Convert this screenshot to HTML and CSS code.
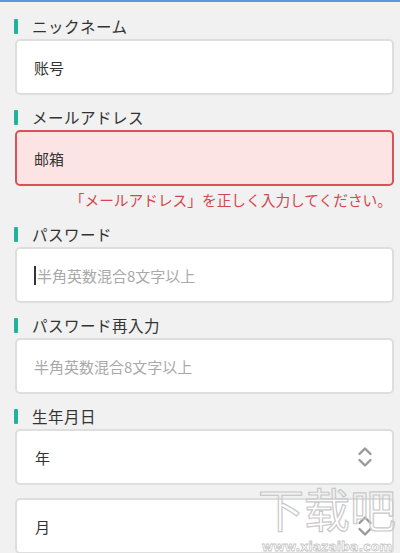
FILE: index.html
```html
<!DOCTYPE html>
<html lang="ja">
<head>
<meta charset="utf-8">
<link rel="stylesheet" href="styles.css">
</head>
<body>
<div class="topline"></div>
<form class="form">
  <div class="group">
    <div class="label"><span class="bar"></span>ニックネーム</div>
    <div class="field"><span class="value">账号</span></div>
  </div>
  <div class="group">
    <div class="label"><span class="bar"></span>メールアドレス</div>
    <div class="field error"><span class="value">邮箱</span></div>
    <div class="errmsg">「メールアドレス」を正しく入力してください。</div>
  </div>
  <div class="group">
    <div class="label"><span class="bar"></span>パスワード</div>
    <div class="field"><span class="cursor"></span><span class="placeholder">半角英数混合8文字以上</span></div>
  </div>
  <div class="group">
    <div class="label"><span class="bar"></span>パスワード再入力</div>
    <div class="field"><span class="placeholder">半角英数混合8文字以上</span></div>
  </div>
  <div class="group">
    <div class="label"><span class="bar"></span>生年月日</div>
    <div class="field select"><span class="value">年</span>
      <svg class="chev" width="16" height="24" viewBox="0 0 16 24"><path d="M2.5 9 L8 3.5 L13.5 9" fill="none" stroke="#9a9a9a" stroke-width="2.4" stroke-linecap="round" stroke-linejoin="round"/><path d="M2.5 15 L8 20.5 L13.5 15" fill="none" stroke="#9a9a9a" stroke-width="2.4" stroke-linecap="round" stroke-linejoin="round"/></svg>
    </div>
    <div class="field select next"><span class="value">月</span>
      <svg class="chev" width="16" height="24" viewBox="0 0 16 24"><path d="M2.5 9 L8 3.5 L13.5 9" fill="none" stroke="#9a9a9a" stroke-width="2.4" stroke-linecap="round" stroke-linejoin="round"/><path d="M2.5 15 L8 20.5 L13.5 15" fill="none" stroke="#9a9a9a" stroke-width="2.4" stroke-linecap="round" stroke-linejoin="round"/></svg>
    </div>
  </div>
</form>
<div class="watermark"><div class="wm-big">下载吧</div><div class="wm-small">www.xiazaiba.com</div></div>
</body>
</html>
```

FILE: styles.css
```css
html, body {
  margin: 0;
  padding: 0;
  background: #f1f1f1;
  overflow: hidden;
  height: 553px;
}
body {
  font-family: "Noto Sans CJK JP", "Noto Sans CJK SC", "Noto Sans", sans-serif;
  color: #333;
  position: relative;
}
.topline {
  height: 2px;
  background: #5a9ad6;
}
.form {
  padding: 14px 6px 0 15px;
}
.group {
  margin-top: 12px;
}
.group:first-child {
  margin-top: 0;
}
.label {
  display: flex;
  align-items: center;
  height: 20px;
  margin-bottom: 3px;
  margin-left: -1px;
  font-size: 15.5px;
  letter-spacing: 0.5px;
  color: #333;
}
.bar {
  width: 4px;
  height: 15px;
  background: #1fb39b;
  margin-right: 14px;
  border-radius: 1px;
}
.field {
  box-sizing: border-box;
  height: 56px;
  background: #fff;
  border: 2px solid #dedede;
  border-radius: 5px;
  display: flex;
  align-items: center;
  padding: 0 20px 0 17px;
  font-size: 15px;
}
.field.error {
  background: #fde4e4;
  border-color: #d8525a;
}
.value {
  color: #333;
}
.placeholder {
  color: #a9a9a9;
}
.cursor {
  display: inline-block;
  width: 2px;
  height: 19px;
  background: #333;
  margin-right: 1px;
}
.errmsg {
  height: 25px;
  line-height: 25px;
  text-align: right;
  font-size: 14.7px;
  color: #d4474e;
  padding-right: 2px;
  margin-top: 1px;
  white-space: nowrap;
}
.select {
  justify-content: space-between;
  padding-right: 19px;
}
.select .value {
  margin-left: 1px;
}
.chev {
  display: block;
}
.next {
  margin-top: 13px;
}
.watermark {
  position: absolute;
  left: 256px;
  top: 478px;
  width: 142px;
  text-align: center;
  pointer-events: none;
}
.wm-big {
  font-family: "Noto Sans CJK SC", sans-serif;
  font-size: 46px;
  line-height: 58px;
  color: transparent;
  -webkit-text-stroke: 1.2px #c9c9c9;
}
.wm-small {
  font-family: "DejaVu Sans", sans-serif;
  font-size: 12.5px;
  font-weight: bold;
  line-height: 12px;
  margin-top: 5px;
  color: transparent;
  -webkit-text-stroke: 0.8px #c6c6c6;
}
```
